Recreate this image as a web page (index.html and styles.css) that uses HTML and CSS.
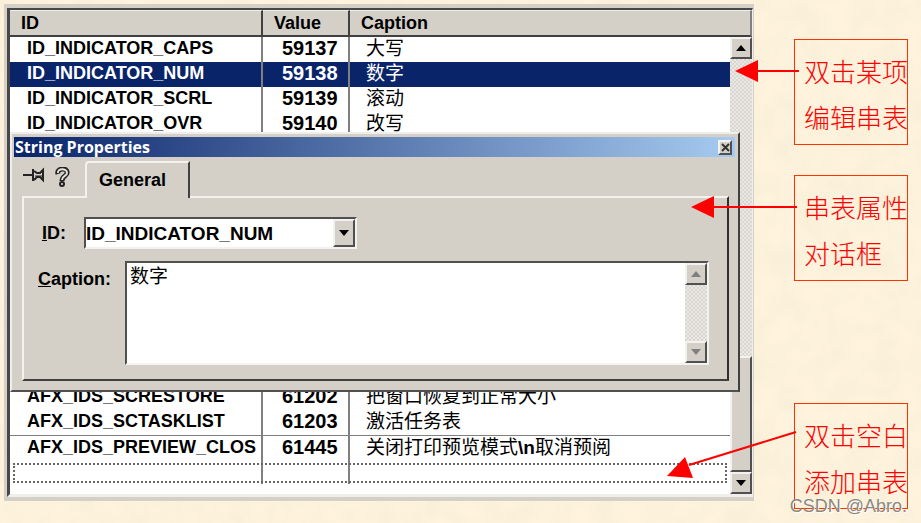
FILE: index.html
```html
<!DOCTYPE html>
<html lang="zh-CN">
<head>
  <meta charset="utf-8">
  <title>String Table</title>
  <link rel="stylesheet" href="styles.css">
</head>
<body>
  <svg class="paper" aria-hidden="true">
    <filter id="grain">
      <feTurbulence type="fractalNoise" baseFrequency="0.04" numOctaves="3" seed="4" />
      <feColorMatrix values="0 0 0 0 0.96  0 0 0 0 0.87  0 0 0 0 0.70  2.4 0 0 0 -0.7" />
    </filter>
    <rect width="100%" height="100%" filter="url(#grain)" />
  </svg>

  <main class="window">
    <div class="frame">
      <table class="strings">
        <colgroup>
          <col class="col-id">
          <col class="col-value">
          <col>
        </colgroup>
        <thead>
          <tr><th>ID</th><th>Value</th><th>Caption</th></tr>
        </thead>
        <tbody>
          <tr><td>ID_INDICATOR_CAPS</td><td class="num">59137</td><td class="text">大写</td></tr>
          <tr class="selected"><td>ID_INDICATOR_NUM</td><td class="num">59138</td><td class="text">数字</td></tr>
          <tr><td>ID_INDICATOR_SCRL</td><td class="num">59139</td><td class="text">滚动</td></tr>
          <tr><td>ID_INDICATOR_OVR</td><td class="num">59140</td><td class="text">改写</td></tr>
          <tr class="covered"><td></td><td></td><td></td></tr>
          <tr><td>AFX_IDS_SCRESTORE</td><td class="num">61202</td><td class="text">把窗口恢复到正常大小</td></tr>
          <tr class="group-end"><td>AFX_IDS_SCTASKLIST</td><td class="num">61203</td><td class="text">激活任务表</td></tr>
          <tr><td>AFX_IDS_PREVIEW_CLOS</td><td class="num">61445</td><td class="text">关闭打印预览模式<b>\n</b>取消预阅</td></tr>
          <tr class="blank"><td></td><td></td><td></td></tr>
        </tbody>
      </table>
      <div class="side">
        <div class="corner"></div>
        <div class="scrollbar">
          <button class="arrow" aria-label="Scroll up"><svg width="10" height="6"><path d="M0 6 5 0l5 6z" /></svg></button>
          <div class="track"><div class="thumb"></div></div>
          <button class="arrow" aria-label="Scroll down"><svg width="10" height="6"><path d="M0 0h10L5 6z" /></svg></button>
        </div>
      </div>
    </div>

    <section class="dialog">
      <header class="titlebar">
        <h1>String Properties</h1>
        <button class="close" aria-label="Close"><svg width="9" height="9"><path d="M1 1l7 7M8 1L1 8" /></svg></button>
      </header>
      <div class="tabs">
        <svg class="icon" width="22" height="16" viewBox="0 0 22 16">
          <path d="M0 8h10" stroke="#222" stroke-width="2" />
          <path d="M10 2v12M11 4l3 2h3l3-3v10l-3-3h-3l-3 3" fill="none" stroke="#222" stroke-width="2" />
          <path d="M12 9h8" stroke="#222" />
        </svg>
        <svg class="icon" width="15" height="20" viewBox="0 0 15 20">
          <path d="M3 7C1 1 13 0 12 6c0 3-5 3-5 8" fill="none" stroke="#222" stroke-width="5" />
          <path d="M3 6C2 1 12 1 12 6c0 3-5 3-5 7" fill="none" stroke="#e4e1da" stroke-width="2" />
          <circle cx="7" cy="17" r="2" fill="#e4e1da" stroke="#222" stroke-width="2" />
        </svg>
        <button class="tab">General</button>
      </div>
      <div class="panel">
        <div class="field id-field">
          <label for="string-id"><u>I</u>D:</label>
          <div class="combo">
            <select id="string-id"><option>ID_INDICATOR_NUM</option></select>
            <span class="drop"><svg width="10" height="6"><path d="M0 0h10L5 6z" /></svg></span>
          </div>
        </div>
        <div class="field">
          <label for="caption"><u>C</u>aption:</label>
          <div class="memo">
            <textarea id="caption">数字</textarea>
            <div class="scrollbar disabled">
              <button class="arrow" aria-label="Caption up" disabled><svg width="10" height="6"><path d="M0 6 5 0l5 6z" /></svg></button>
              <div class="track"></div>
              <button class="arrow" aria-label="Caption down" disabled><svg width="10" height="6"><path d="M0 0h10L5 6z" /></svg></button>
            </div>
          </div>
        </div>
      </div>
    </section>
  </main>

  <aside class="notes">
    <div class="note">双击某项<br>编辑串表
      <svg class="pointer near" width="64" height="24"><path d="M22 10h42v2H22zM0 11 23 0v22z" /></svg>
    </div>
    <div class="note">串表属性<br>对话框
      <svg class="pointer far" width="106" height="24"><path d="M22 10h84v2H22zM0 11 23 0v22z" /></svg>
    </div>
    <div class="note last">双击空白<br>添加串表
      <svg class="pointer slant" width="130" height="50"><path d="M129 2 22 35" stroke="red" stroke-width="2" /><path d="M0 46 18 27l8 21z" /></svg>
    </div>
  </aside>
  <span class="watermark">CSDN @Abro.</span>
</body>
</html>
```
FILE: styles.css
```css
* {
  box-sizing: border-box;
}
body {
  position: relative;
  display: flex;
  align-items: flex-start;
  min-height: 100vh;
  margin: 0;
  padding: 4px 13px 0 4px;
  overflow: hidden;
  background: #fff3dd;
  color: #000;
  font-family: "Liberation Sans", "Noto Sans CJK SC", sans-serif;
  font-size: 18px;
}
button, select, textarea {
  margin: 0;
  padding: 0;
  border-radius: 0;
  color: inherit;
  font: inherit;
}
.paper {
  position: absolute;
  inset: 0;
  width: 100%;
  height: 100%;
  z-index: -1;
}

/* string table */
.window {
  position: relative;
  flex: 1;
  padding: 4px 1px 4px 3px;
  background: #d4d0c8;
}
.frame {
  display: flex;
  border: solid #484848;
  border-width: 2px 1px 3px 3px;
  border-right-color: #f0eeea;
  border-bottom-color: #f0eeea;
  background: #fff;
}
.strings {
  flex: 1;
  align-self: flex-start;
  margin-bottom: 10px;
  table-layout: fixed;
  border-spacing: 0;
  line-height: 22px;
  white-space: nowrap;
}
.col-id {
  width: 253px;
}
.col-value {
  width: 87px;
}
th, .corner {
  height: 27px;
  border-top: 1px solid #f0eeea;
  border-bottom: 2px solid #404040;
  background: #d4d0c8;
}
th {
  padding: 0 11px;
  border-right: 2px solid #404040;
  text-align: left;
}
th:last-child {
  border-right: 0;
}
td {
  height: 25px;
  padding: 0 0 3px 17px;
  border-right: 2px solid #808080;
  overflow: hidden;
  font-weight: bold;
}
td:last-child {
  border-right: 0;
}
.num {
  padding-left: 19px;
  font-size: 20px;
}
.text {
  padding: 1px 0 2px 16px;
  font-size: 19px;
  font-weight: normal;
}
.selected {
  background: #0a246a;
  color: #fff;
}
.covered td {
  height: 248px;
}
.group-end td {
  border-bottom: 1px solid #808080;
}
.blank {
  position: relative;
}
.blank td {
  height: 23px;
}
.blank::after {
  content: "";
  position: absolute;
  inset: 2px 3px 1px;
  border: 2px dotted #666;
}

/* scroll bars */
.side {
  display: flex;
  flex-direction: column;
  width: 22px;
}
.corner {
  border-right: 2px solid #808080;
}
.scrollbar {
  display: flex;
  flex-direction: column;
  width: 22px;
}
.side .scrollbar {
  flex: 1;
}
.arrow, .drop, .thumb, .close {
  border: 2px solid;
  border-color: #f4f2ee #505050 #505050 #f4f2ee;
  background: #d4d0c8;
}
.arrow, .drop {
  display: flex;
  align-items: center;
  justify-content: center;
  width: 22px;
  height: 22px;
}
.track {
  display: flex;
  flex: 1;
  flex-direction: column;
  justify-content: flex-end;
  background: repeating-conic-gradient(#dad7d0 0 25%, #eae8e4 0 50%) 0 0 / 4px 4px;
}
.thumb {
  height: 116px;
}
.disabled svg {
  fill: #808080;
}

/* properties dialog */
.dialog {
  position: absolute;
  top: 128px;
  left: 6px;
  right: 14px;
  padding: 3px 3px 9px 2px;
  border: 2px solid;
  border-color: #f0eeea #404040 #505050 #f0eeea;
  background: #d4d0c8;
}
.titlebar {
  display: flex;
  align-items: center;
  justify-content: space-between;
  height: 20px;
  padding: 0 3px 0 1px;
  background: linear-gradient(90deg, #0a246a, #a6caf0);
}
h1 {
  margin: 0;
  color: #fff;
  font: bold 16px/20px "Open Sans", sans-serif;
}
.close {
  display: flex;
  align-items: center;
  justify-content: center;
  width: 14px;
  height: 15px;
}
.close path {
  fill: none;
  stroke: #333;
  stroke-width: 2;
}
.tabs {
  display: flex;
  padding: 4px 0 0 9px;
}
.icon {
  margin: 6px 10px 0 0;
}
.tab {
  position: relative;
  width: 105px;
  height: 37px;
  margin: 0 0 -2px 5px;
  padding-left: 12px;
  border: 2px solid #f4f2ee;
  border-right: 2px solid #404040;
  border-bottom: 0;
  border-top-left-radius: 4px;
  background: #d4d0c8;
  font-weight: bold;
  text-align: left;
}
.panel {
  margin: 0 6px 0 8px;
  padding: 19px 18px 14px 14px;
  border: 2px solid;
  border-color: #f4f2ee #303030 #404040 #f4f2ee;
}
.field {
  display: flex;
  font-weight: bold;
}
.field label {
  width: 87px;
  padding-top: 8px;
}
.id-field {
  margin-bottom: 12px;
}
.id-field label {
  width: 46px;
  padding: 6px 0 0 4px;
}
.combo, .memo {
  display: flex;
  border: 2px solid;
  border-color: #505050 #f4f2ee #f4f2ee #505050;
  background: #fff;
}
.combo {
  width: 273px;
  height: 32px;
}
.combo select {
  flex: 1;
  border: 0;
  background: none;
  font-size: 19px;
  font-weight: bold;
  appearance: none;
}
.drop {
  height: 28px;
}
.memo {
  flex: 1;
  height: 104px;
}
.memo textarea {
  flex: 1;
  padding: 3px;
  border: 0;
  background: none;
  font-size: 19px;
  font-weight: normal;
  line-height: 22px;
  overflow: hidden;
  resize: none;
}

/* callouts */
.notes {
  width: 114px;
  margin: 35px 0 0 40px;
}
.note {
  position: relative;
  margin-bottom: 30px;
  padding: 8px 0 4px 9px;
  border: 1px solid #ff3300;
  color: #f00;
  font: 300 26px/46px "Noto Sans CJK SC", sans-serif;
  white-space: nowrap;
}
.note.last {
  margin: 122px 0 0;
}
.pointer {
  position: absolute;
  top: 20px;
  right: 110px;
  fill: #f00;
}
.near {
  right: 108px;
}
.slant {
  top: 26px;
}
.watermark {
  position: absolute;
  right: 14px;
  bottom: 6px;
  color: #8c8880;
  text-shadow: 1px 1px #fff;
}
```
